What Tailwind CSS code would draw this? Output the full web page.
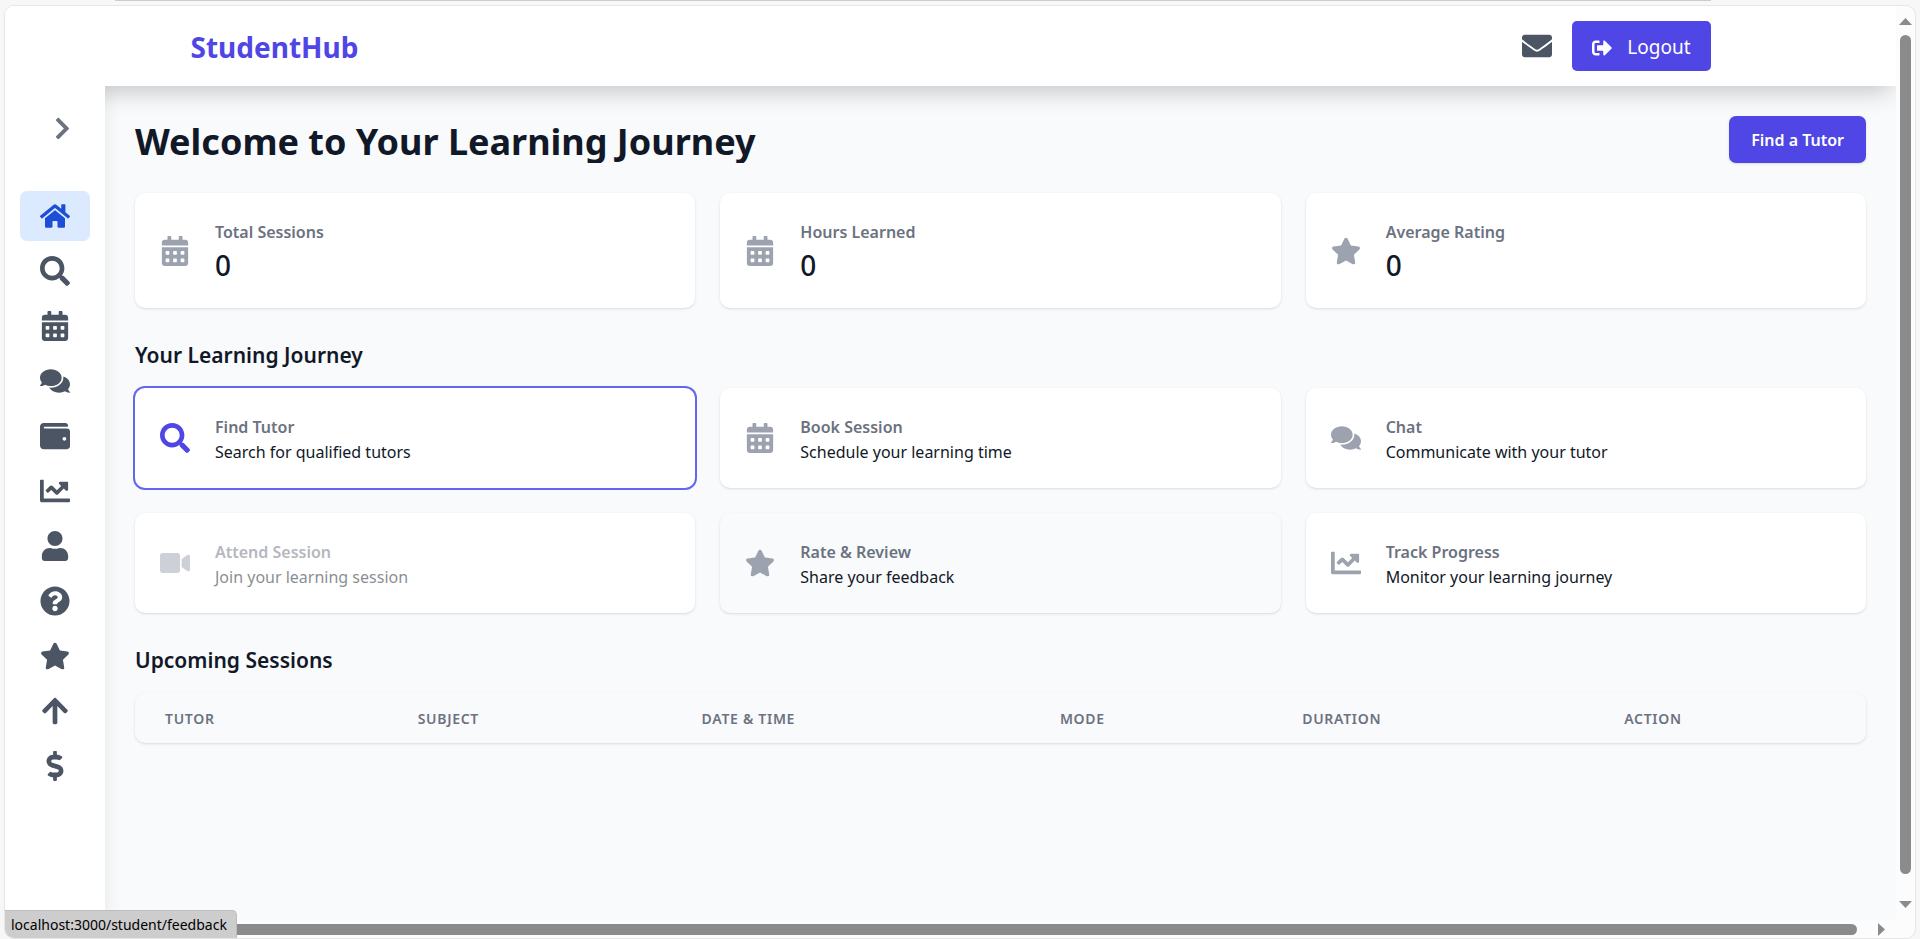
<!DOCTYPE html>
<html lang="en">
<head>
<meta charset="utf-8">
<meta name="viewport" content="width=device-width, initial-scale=1">
<title>StudentHub</title>
<script src="https://cdn.jsdelivr.net/npm/@tailwindcss/browser@4"></script>
</head>
<body class="flex h-screen flex-col overflow-hidden bg-[#f7f7f7] px-1 font-['Noto_Sans','Open_Sans',sans-serif] text-[#111827]">

<svg class="hidden" aria-hidden="true">
  <symbol id="home" viewBox="0 0 576 512"><path d="M280.37 148.26L96 300.11V464a16 16 0 0 0 16 16l112.06-.29a16 16 0 0 0 15.92-16V368a16 16 0 0 1 16-16h64a16 16 0 0 1 16 16v95.64a16 16 0 0 0 16 16.05L464 480a16 16 0 0 0 16-16V300L295.67 148.26a12.19 12.19 0 0 0-15.3 0zM571.6 251.47L488 182.56V44.05a12 12 0 0 0-12-12h-56a12 12 0 0 0-12 12v72.61L318.47 43a48 48 0 0 0-61 0L4.34 251.47a12 12 0 0 0-1.6 16.9l25.5 31A12 12 0 0 0 45.15 301l235.22-193.74a12.19 12.19 0 0 1 15.3 0L530.9 301a12 12 0 0 0 16.9-1.6l25.5-31a12 12 0 0 0-1.7-16.93z"/></symbol>
  <symbol id="search" viewBox="0 0 512 512"><path d="M505 442.7L405.3 343c-4.5-4.5-10.6-7-17-7H372c27.6-35.3 44-79.7 44-128C416 93.1 322.9 0 208 0S0 93.1 0 208s93.1 208 208 208c48.3 0 92.7-16.4 128-44v16.3c0 6.4 2.5 12.5 7 17l99.7 99.7c9.4 9.4 24.6 9.4 33.9 0l28.3-28.3c9.4-9.4 9.4-24.6.1-34zM208 336c-70.7 0-128-57.2-128-128 0-70.7 57.2-128 128-128 70.7 0 128 57.2 128 128 0 70.7-57.2 128-128 128z"/></symbol>
  <symbol id="calendar" viewBox="0 0 448 512"><path d="M0 464c0 26.5 21.5 48 48 48h352c26.5 0 48-21.5 48-48V192H0v272zm320-196c0-6.6 5.4-12 12-12h40c6.6 0 12 5.4 12 12v40c0 6.6-5.4 12-12 12h-40c-6.6 0-12-5.4-12-12v-40zm0 128c0-6.6 5.4-12 12-12h40c6.6 0 12 5.4 12 12v40c0 6.6-5.4 12-12 12h-40c-6.6 0-12-5.4-12-12v-40zM192 268c0-6.6 5.4-12 12-12h40c6.6 0 12 5.4 12 12v40c0 6.6-5.4 12-12 12h-40c-6.6 0-12-5.4-12-12v-40zm0 128c0-6.6 5.4-12 12-12h40c6.6 0 12 5.4 12 12v40c0 6.6-5.4 12-12 12h-40c-6.6 0-12-5.4-12-12v-40zM64 268c0-6.6 5.4-12 12-12h40c6.6 0 12 5.4 12 12v40c0 6.6-5.4 12-12 12H76c-6.6 0-12-5.4-12-12v-40zm0 128c0-6.6 5.4-12 12-12h40c6.6 0 12 5.4 12 12v40c0 6.6-5.4 12-12 12H76c-6.6 0-12-5.4-12-12v-40zM400 64h-48V16c0-8.8-7.2-16-16-16h-32c-8.8 0-16 7.2-16 16v48H160V16c0-8.8-7.2-16-16-16h-32c-8.8 0-16 7.2-16 16v48H48C21.5 64 0 85.5 0 112v48h448v-48c0-26.5-21.5-48-48-48z"/></symbol>
  <symbol id="comments" viewBox="0 0 576 512"><path d="M416 192c0-88.4-93.1-160-208-160S0 103.6 0 192c0 34.3 14.1 65.9 38 92-13.4 30.2-35.5 54.2-35.8 54.5-2.2 2.3-2.8 5.7-1.5 8.7S4.8 352 8 352c36.6 0 66.9-12.3 88.7-25 32.2 15.7 70.3 25 111.3 25 114.9 0 208-71.6 208-160zm122 220c23.9-26 38-57.7 38-92 0-66.9-53.5-124.2-129.3-148.1.9 6.6 1.3 13.3 1.3 20.1 0 105.9-107.7 192-240 192-10.8 0-21.3-.8-31.7-1.9C207.8 439.6 281.8 480 368 480c41 0 79.1-9.2 111.3-25 21.8 12.7 52.1 25 88.7 25 3.2 0 6.1-1.9 7.3-4.8 1.3-2.9.7-6.3-1.5-8.7-.3-.3-22.4-24.2-35.8-54.5z"/></symbol>
  <symbol id="wallet" viewBox="0 0 512 512"><path d="M461.2 128H80c-8.84 0-16-7.16-16-16s7.16-16 16-16h384c8.84 0 16-7.16 16-16 0-26.51-21.49-48-48-48H64C28.65 32 0 60.65 0 96v320c0 35.35 28.65 64 64 64h397.2c28.02 0 50.8-21.53 50.8-48V176c0-26.47-22.78-48-50.8-48zM416 336c-17.67 0-32-14.33-32-32s14.33-32 32-32 32 14.33 32 32-14.33 32-32 32z"/></symbol>
  <symbol id="chart" viewBox="0 0 512 512"><path d="M496 384H64V80c0-8.84-7.16-16-16-16H16C7.16 64 0 71.16 0 80v336c0 17.67 14.33 32 32 32h464c8.84 0 16-7.16 16-16v-32c0-8.84-7.16-16-16-16zM464 96H345.94c-21.38 0-32.09 25.85-16.97 40.97l32.4 32.4L288 242.75l-73.37-73.37c-12.5-12.5-32.76-12.5-45.25 0l-68.69 68.69c-6.25 6.25-6.25 16.38 0 22.63l22.62 22.62c6.25 6.25 16.38 6.25 22.63 0L192 237.25l73.37 73.37c12.5 12.5 32.76 12.5 45.25 0l96-96 32.4 32.4c15.12 15.12 40.97 4.41 40.97-16.97V112c.01-8.84-7.15-16-15.99-16z"/></symbol>
  <symbol id="user" viewBox="0 0 448 512"><path d="M224 256c70.7 0 128-57.3 128-128S294.7 0 224 0 96 57.3 96 128s57.3 128 128 128zm89.6 32h-16.7c-22.2 10.2-46.9 16-72.9 16s-50.6-5.8-72.9-16h-16.7C60.2 288 0 348.2 0 422.4V464c0 26.5 21.5 48 48 48h352c26.5 0 48-21.5 48-48v-41.6c0-74.2-60.2-134.4-134.4-134.4z"/></symbol>
  <symbol id="question" viewBox="0 0 512 512"><path d="M504 256c0 136.997-111.043 248-248 248S8 392.997 8 256C8 119.083 119.043 8 256 8s248 111.083 248 248zM262.655 90c-54.497 0-89.255 22.957-116.549 63.758-3.536 5.286-2.353 12.415 2.715 16.258l34.699 26.31c5.205 3.947 12.621 3.008 16.665-2.122 17.864-22.658 30.113-35.797 57.303-35.797 20.429 0 45.698 13.148 45.698 32.958 0 14.976-12.363 22.667-32.534 33.976C247.128 238.528 216 254.941 216 296v4c0 6.627 5.373 12 12 12h56c6.627 0 12-5.373 12-12v-1.333c0-28.462 83.186-29.647 83.186-106.667 0-58.002-60.165-102-116.531-102zM256 338c-25.365 0-46 20.635-46 46 0 25.364 20.635 46 46 46s46-20.636 46-46c0-25.365-20.635-46-46-46z"/></symbol>
  <symbol id="star" viewBox="0 0 576 512"><path d="M259.3 17.8L194 150.2 47.9 171.5c-26.2 3.8-36.7 36.1-17.7 54.6l105.7 103-25 145.5c-4.5 26.3 23.2 46 46.4 33.7L288 439.6l130.7 68.7c23.2 12.2 50.9-7.4 46.4-33.7l-25-145.5 105.7-103c19-18.5 8.5-50.8-17.7-54.6L382 150.2 316.7 17.8c-11.7-23.6-45.6-23.9-57.4 0z"/></symbol>
  <symbol id="arrow-up" viewBox="0 0 448 512"><path d="M34.9 289.5l-22.2-22.2c-9.4-9.4-9.4-24.6 0-33.9L207 39c9.4-9.4 24.6-9.4 33.9 0l194.3 194.3c9.4 9.4 9.4 24.6 0 33.9L413 289.4c-9.5 9.5-25 9.3-34.3-.4L264 168.6V456c0 13.3-10.7 24-24 24h-32c-13.3 0-24-10.7-24-24V168.6L69.2 289.1c-9.3 9.8-24.8 10-34.3.4z"/></symbol>
  <symbol id="dollar" viewBox="0 0 288 512"><path d="M209.2 233.4l-108-31.6C88.7 198.2 80 186.5 80 173.5c0-16.3 13.2-29.5 29.5-29.5h66.3c12.2 0 24.2 3.7 34.2 10.5 6.1 4.1 14.3 3.1 19.5-2l34.8-34c7.1-6.9 6.1-18.4-1.8-24.5C238 74.8 207.4 64.1 176 64V16c0-8.8-7.2-16-16-16h-32c-8.8 0-16 7.2-16 16v48h-2.5C45.8 64-5.4 118.7.5 183.6c4.2 46.1 39.4 83.6 83.8 96.6l102.5 30c12.5 3.7 21.2 15.3 21.2 28.3 0 16.3-13.2 29.5-29.5 29.5h-66.3C100 368 88 364.3 78 357.5c-6.1-4.1-14.3-3.1-19.5 2l-34.8 34c-7.1 6.9-6.1 18.4 1.8 24.5 24.5 19.2 55.1 29.9 86.5 30v48c0 8.8 7.2 16 16 16h32c8.8 0 16-7.2 16-16v-48.2c46.6-.9 90.3-28.6 105.7-72.7 21.5-61.6-14.6-124.8-72.5-141.7z"/></symbol>
  <symbol id="chevron" viewBox="0 0 320 512"><path d="M285.476 272.971L91.132 467.314c-9.373 9.373-24.569 9.373-33.941 0l-22.667-22.667c-9.357-9.357-9.375-24.522-.04-33.901L188.505 256 34.484 101.255c-9.335-9.379-9.317-24.544.04-33.901l22.667-22.667c9.373-9.373 24.569-9.373 33.941 0L285.475 239.03c9.373 9.372 9.373 24.568.001 33.941z"/></symbol>
  <symbol id="video" viewBox="0 0 576 512"><path d="M336.2 64H47.8C21.4 64 0 85.4 0 111.8v288.4C0 426.6 21.4 448 47.8 448h288.4c26.4 0 47.8-21.4 47.8-47.8V111.8c0-26.4-21.4-47.8-47.8-47.8zm189.4 37.7L416 177.3v157.4l109.6 75.5c21.2 14.6 50.4-.3 50.4-25.8V127.5c0-25.4-29.1-40.4-50.4-25.8z"/></symbol>
  <symbol id="envelope" viewBox="0 0 512 512"><path d="M502.3 190.8c3.9-3.1 9.7-.2 9.7 4.7V400c0 26.5-21.5 48-48 48H48c-26.5 0-48-21.5-48-48V195.6c0-5 5.7-7.8 9.7-4.7 22.4 17.4 52.1 39.5 154.1 113.6 21.1 15.4 56.7 47.8 92.2 47.6 35.7.3 72-32.8 92.3-47.6 102-74.1 131.6-96.3 154-113.7zM256 320c23.2.4 56.6-29.2 73.4-41.4 132.7-96.3 142.8-104.7 173.4-128.7 5.8-4.5 9.2-11.5 9.2-18.9v-19c0-26.5-21.5-48-48-48H48c-26.5 0-48 21.5-48 48v19c0 7.4 3.4 14.3 9.2 18.9 30.6 23.9 40.7 32.4 173.4 128.7 16.8 12.2 50.2 41.8 73.4 41.4z"/></symbol>
  <symbol id="logout" viewBox="0 0 512 512"><path d="M497 273L329 441c-15 15-41 4.5-41-17v-96H152c-13.3 0-24-10.7-24-24v-96c0-13.3 10.7-24 24-24h136V88c0-21.4 25.9-32 41-17l168 168c9.3 9.4 9.3 24.6 0 34zM192 436v-40c0-6.6-5.4-12-12-12H96c-17.7 0-32-14.3-32-32V160c0-17.7 14.3-32 32-32h84c6.6 0 12-5.4 12-12V76c0-6.6-5.4-12-12-12H96c-53 0-96 43-96 96v192c0 53 43 96 96 96h84c6.6 0 12-5.4 12-12z"/></symbol>
</svg>

<div class="mr-[205px] ml-[111px] h-[5px] shrink-0 border-t border-[#cccccc]"></div>

<div class="relative flex min-h-0 flex-1 flex-col overflow-hidden rounded-[10px] border border-[#e6e6e6] bg-[#fcfcfc]">
  <div class="flex min-h-0 flex-1">
    <!-- Page -->
    <div class="flex min-w-0 flex-1 flex-col overflow-hidden bg-[#f9fafb]">
      <header class="relative z-10 shrink-0 bg-white shadow-[0_10px_25px_-5px_rgba(0,0,0,0.22)]">
        <div class="mx-auto flex h-20 max-w-[1600px] items-center justify-between px-10">
          <a href="#" class="pt-[2px] text-[28px] font-bold text-[#4f46e5]">StudentHub</a>
          <div class="flex items-center gap-5">
            <a href="#" aria-label="Messages" class="text-[#4b5563]"><svg class="size-[30px] fill-current"><use href="#envelope"/></svg></a>
            <button type="button" class="flex h-[50px] items-center gap-[15px] rounded-[5px] bg-[#4f46e5] px-5 text-[19px] text-white"><svg class="mt-1 size-5 fill-current"><use href="#logout"/></svg><span class="pt-[2px]">Logout</span></button>
          </div>
        </div>
      </header>

      <div class="flex min-h-0 flex-1">
        <aside class="relative z-20 w-[100px] shrink-0 bg-white px-[15px] shadow-[4px_0_15px_rgba(0,0,0,0.06)] [clip-path:inset(0_-30px_0_0)]">
          <div class="flex h-[105px] items-start justify-end pt-[30px] pr-[15px]">
            <button type="button" aria-label="Expand menu" class="text-[#6b7280]"><svg class="size-[25px] fill-current"><use href="#chevron"/></svg></button>
          </div>
          <nav class="flex flex-col gap-[5px] text-[#4b5563]">
            <a href="#" aria-label="Dashboard" class="flex h-[50px] items-center justify-center rounded-[7px] bg-[#dbeafe] text-[#1d4ed8]"><svg class="size-[30px] fill-current"><use href="#home"/></svg></a>
            <a href="#" aria-label="Find tutor" class="flex h-[50px] items-center justify-center"><svg class="size-[30px] fill-current"><use href="#search"/></svg></a>
            <a href="#" aria-label="Sessions" class="flex h-[50px] items-center justify-center"><svg class="size-[30px] fill-current"><use href="#calendar"/></svg></a>
            <a href="#" aria-label="Chat" class="flex h-[50px] items-center justify-center"><svg class="size-[30px] fill-current"><use href="#comments"/></svg></a>
            <a href="#" aria-label="Wallet" class="flex h-[50px] items-center justify-center"><svg class="size-[30px] fill-current"><use href="#wallet"/></svg></a>
            <a href="#" aria-label="Progress" class="flex h-[50px] items-center justify-center"><svg class="size-[30px] fill-current"><use href="#chart"/></svg></a>
            <a href="#" aria-label="Profile" class="flex h-[50px] items-center justify-center"><svg class="size-[30px] fill-current"><use href="#user"/></svg></a>
            <a href="#" aria-label="Help" class="flex h-[50px] items-center justify-center"><svg class="size-[30px] fill-current"><use href="#question"/></svg></a>
            <a href="#" aria-label="Feedback" class="flex h-[50px] items-center justify-center"><svg class="size-[30px] fill-current"><use href="#star"/></svg></a>
            <a href="#" aria-label="Upgrade" class="flex h-[50px] items-center justify-center"><svg class="size-[30px] fill-current"><use href="#arrow-up"/></svg></a>
            <a href="#" aria-label="Payments" class="flex h-[50px] items-center justify-center"><svg class="size-[30px] fill-current"><use href="#dollar"/></svg></a>
          </nav>
        </aside>

        <main class="min-w-0 flex-1 p-[30px]">
          <div class="flex items-center justify-between">
            <h1 class="truncate pt-1 text-[36px] leading-[42px] font-bold">Welcome to Your Learning Journey</h1>
            <a href="#" class="flex h-[47px] shrink-0 items-center rounded-[7px] bg-[#4f46e5] px-[22px] pt-px text-[16px] font-semibold text-white shadow-sm">Find a Tutor</a>
          </div>

          <section class="mt-[30px] grid grid-cols-3 gap-[25px]">
            <div class="flex items-center gap-[25px] rounded-[10px] bg-white px-[25px] shadow-sm">
              <svg class="size-[30px] shrink-0 fill-[#9ca3af]"><use href="#calendar"/></svg>
              <dl class="pt-[27px] pb-[23px]"><dt class="text-[16px] leading-[25px] font-semibold text-[#6b7280]">Total Sessions</dt><dd class="text-[28px] leading-10 font-medium">0</dd></dl>
            </div>
            <div class="flex items-center gap-[25px] rounded-[10px] bg-white px-[25px] shadow-sm">
              <svg class="size-[30px] shrink-0 fill-[#9ca3af]"><use href="#calendar"/></svg>
              <dl class="pt-[27px] pb-[23px]"><dt class="text-[16px] leading-[25px] font-semibold text-[#6b7280]">Hours Learned</dt><dd class="text-[28px] leading-10 font-medium">0</dd></dl>
            </div>
            <div class="flex items-center gap-[25px] rounded-[10px] bg-white px-[25px] shadow-sm">
              <svg class="size-[30px] shrink-0 fill-[#9ca3af]"><use href="#star"/></svg>
              <dl class="pt-[27px] pb-[23px]"><dt class="text-[16px] leading-[25px] font-semibold text-[#6b7280]">Average Rating</dt><dd class="text-[28px] leading-10 font-medium">0</dd></dl>
            </div>
          </section>

          <h2 class="mt-8 mb-[18px] text-[21px] leading-[30px] font-semibold">Your Learning Journey</h2>
          <section class="grid grid-cols-3 gap-[25px] text-[16px] leading-[25px]">
            <a href="#" class="flex items-center gap-[25px] rounded-[10px] bg-white px-[25px] ring-2 ring-[#6366f1]">
              <svg class="size-[30px] shrink-0 fill-[#4f46e5]"><use href="#search"/></svg>
              <span class="pt-[27px] pb-[23px]"><span class="block font-semibold text-[#6b7280]">Find Tutor</span><span class="block">Search for qualified tutors</span></span>
            </a>
            <a href="#" class="flex items-center gap-[25px] rounded-[10px] bg-white px-[25px] shadow-sm">
              <svg class="size-[30px] shrink-0 fill-[#9ca3af]"><use href="#calendar"/></svg>
              <span class="pt-[27px] pb-[23px]"><span class="block font-semibold text-[#6b7280]">Book Session</span><span class="block">Schedule your learning time</span></span>
            </a>
            <a href="#" class="flex items-center gap-[25px] rounded-[10px] bg-white px-[25px] shadow-sm">
              <svg class="size-[30px] shrink-0 fill-[#9ca3af]"><use href="#comments"/></svg>
              <span class="pt-[27px] pb-[23px]"><span class="block font-semibold text-[#6b7280]">Chat</span><span class="block">Communicate with your tutor</span></span>
            </a>
            <a href="#" class="flex items-center gap-[25px] rounded-[10px] bg-white px-[25px] shadow-sm">
              <svg class="size-[30px] shrink-0 fill-[#9ca3af] opacity-50"><use href="#video"/></svg>
              <span class="pt-[27px] pb-[23px] opacity-50"><span class="block font-semibold text-[#6b7280]">Attend Session</span><span class="block">Join your learning session</span></span>
            </a>
            <a href="#" class="flex items-center gap-[25px] rounded-[10px] bg-[#f9fafb] px-[25px] shadow-sm">
              <svg class="size-[30px] shrink-0 fill-[#9ca3af]"><use href="#star"/></svg>
              <span class="pt-[27px] pb-[23px]"><span class="block font-semibold text-[#6b7280]">Rate &amp; Review</span><span class="block">Share your feedback</span></span>
            </a>
            <a href="#" class="flex items-center gap-[25px] rounded-[10px] bg-white px-[25px] shadow-sm">
              <svg class="size-[30px] shrink-0 fill-[#9ca3af]"><use href="#chart"/></svg>
              <span class="pt-[27px] pb-[23px]"><span class="block font-semibold text-[#6b7280]">Track Progress</span><span class="block">Monitor your learning journey</span></span>
            </a>
          </section>

          <h2 class="mt-8 mb-[18px] text-[21px] leading-[30px] font-semibold">Upcoming Sessions</h2>
          <div class="overflow-hidden rounded-[10px] bg-[#f9fafb] shadow-sm">
            <table class="w-full table-fixed text-left">
              <thead class="text-[14px] leading-5 tracking-wider text-[#6b7280] uppercase">
                <tr>
                  <th scope="col" class="w-[14.6%] px-[30px] pt-4 pb-[14px] font-semibold">Tutor</th>
                  <th scope="col" class="w-[16.4%] px-[30px] pt-4 pb-[14px] font-semibold">Subject</th>
                  <th scope="col" class="w-[20.7%] px-[30px] pt-4 pb-[14px] font-semibold">Date &amp; Time</th>
                  <th scope="col" class="w-[14%] px-[30px] pt-4 pb-[14px] font-semibold">Mode</th>
                  <th scope="col" class="w-[18.6%] px-[30px] pt-4 pb-[14px] font-semibold">Duration</th>
                  <th scope="col" class="w-[15.7%] px-[30px] pt-4 pb-[14px] font-semibold">Action</th>
                </tr>
              </thead>
            </table>
          </div>
        </main>
      </div>
    </div>

    <!-- Vertical scrollbar -->
    <div class="flex w-[19px] shrink-0 flex-col items-center pt-3 pb-3" aria-hidden="true">
      <svg class="h-[7px] w-[13px] shrink-0 fill-[#8b8b8b]" viewBox="0 0 13 7"><path d="M6.5 0L13 7H0z"/></svg>
      <div class="mt-[10px] mb-[27px] w-[11px] flex-1 rounded-full bg-[#8b8b8b]"></div>
      <svg class="h-[7px] w-[13px] shrink-0 fill-[#8b8b8b]" viewBox="0 0 13 7"><path d="M0 0h13L6.5 7z"/></svg>
    </div>
  </div>

  <!-- Horizontal scrollbar -->
  <div class="flex h-[18px] shrink-0 items-center pr-[30px] pl-[30px]" aria-hidden="true">
    <div class="mr-[21px] h-[11px] flex-1 rounded-full bg-[#8b8b8b]"></div>
    <svg class="h-[13px] w-[7px] shrink-0 fill-[#8b8b8b]" viewBox="0 0 7 13"><path d="M0 0l7 6.5L0 13z"/></svg>
  </div>

  <!-- Link status bubble -->
  <div class="absolute bottom-0 left-0 z-30 flex h-7 items-center rounded-tr-[5px] border-t border-r border-[#bdbdbd] bg-[#cdcdcd] pr-[9px] pl-[6px] text-[14px] text-black">localhost:3000/student/feedback</div>
</div>
</body>
</html>
